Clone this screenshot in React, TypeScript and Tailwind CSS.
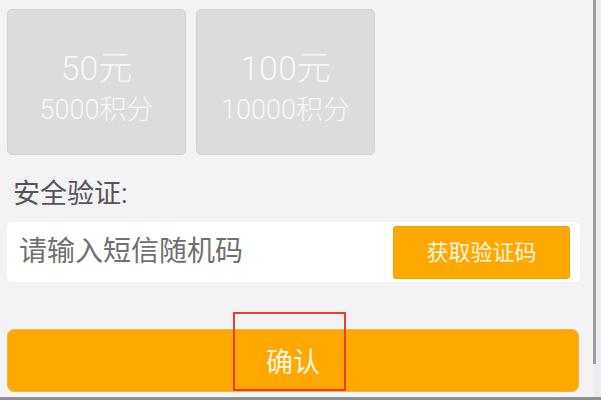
const cjk = "font-['Roboto','Noto_Sans_CJK_SC',sans-serif]";

type Option = { price: string; points: string };

const options: Option[] = [
  { price: "50元", points: "5000积分" },
  { price: "100元", points: "10000积分" },
];

function OptionCard({ option }: { option: Option }) {
  return (
    <div className="flex h-[146px] w-[179px] flex-col items-center justify-center rounded-[5px] border border-[#d2d1d4] bg-[#dcdbde] pt-[10px] text-[#f7f7f8]">
      <div className="text-[34px] font-light leading-[42px]">{option.price}</div>
      <div className="mt-[4px] text-[27px] font-light leading-[34px]">{option.points}</div>
    </div>
  );
}

export default function App() {
  return (
    <div className={`relative flex h-[400px] w-[601px] flex-col overflow-hidden bg-[#f3f2f5] ${cjk}`}>
      <div className="flex min-h-0 flex-1">
        <div className="flex flex-1 flex-col pl-[7px]">
          <div className="mt-[9px] flex gap-[10px]">
            {options.map((o) => (
              <OptionCard key={o.price} option={o} />
            ))}
          </div>

          <div className="mt-[24px] pl-[6px] text-[27px] leading-[31px] text-[#555555]">安全验证:</div>

          <div className="mt-[12px] flex h-[60px] w-[573px] items-center justify-between rounded-[5px] bg-white pl-[12px] pr-[10px]">
            <span className="text-[28px] leading-[34px] text-[#707070]">请输入短信随机码</span>
            <button className="h-[53px] w-[177px] rounded-[3px] border border-[#f2a000] bg-[#ffa800] text-[22px] text-[#fff6e0]">
              获取验证码
            </button>
          </div>

          <button className="mt-[47px] h-[63px] w-[572px] rounded-[7px] border border-[#f0b24a] bg-[#ffa800] pt-[5px] text-[27px] text-[#fff6e0]">
            确认
          </button>
        </div>

        <div className="flex w-[8px] bg-[#ececee]">
          <div className="h-[364px] w-[3px] bg-[#9c9c9e]" />
        </div>
      </div>
      <div className="h-[3px] bg-[#8f8f91]" />

      <div className="absolute left-[233px] top-[312px] h-[79px] w-[113px] border-2 border-[#ec3a35]" />
    </div>
  );
}
